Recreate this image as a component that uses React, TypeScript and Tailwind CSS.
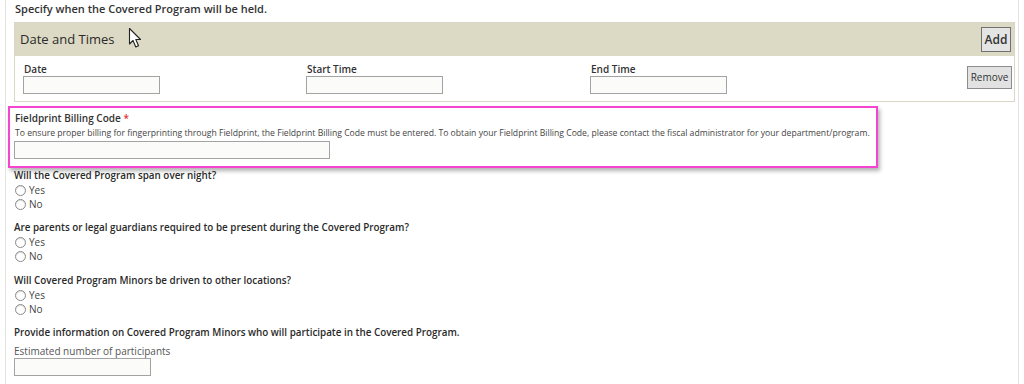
import React from "react";

const Radio = ({ label }: { label: string }) => (
  <div className="flex items-center h-[14px]">
    <span className="w-[11px] h-[11px] rounded-full border border-[#8a8a8a] bg-white ml-[1px] mr-[3px] shadow-[inset_0_1px_1px_rgba(0,0,0,0.15)]" />
    <span className="text-[10px] text-[#444]">{label}</span>
  </div>
);

const Question = ({ q, cls }: { q: string; cls: string }) => (
  <div className={cls}>
    <div className="text-[9.85px] leading-[14px] font-semibold text-[#2a2a2a]">{q}</div>
    <div className="mt-[1px]">
      <Radio label="Yes" />
      <Radio label="No" />
    </div>
  </div>
);

const Input = ({ w }: { w: string }) => (
  <div className={`${w} h-[18px] border border-[#a3a3a3] bg-[#fbfbfa]`} />
);

export default function App() {
  return (
    <div className="relative w-[1024px] h-[384px] bg-white overflow-hidden font-['Open_Sans',sans-serif]">
      <div className="ml-[5px] w-[1014px] h-full border-x border-[#e4e4df] pl-[8px] pr-[3px] pt-[2px]">
        <p className="text-[11px] leading-[14px] font-semibold text-[#333] pl-px">
          Specify when the Covered Program will be held.
        </p>
        <div className="mt-[6px] border border-[#d9d6c8]">
          <div className="h-[33px] bg-[#dcd9c4] flex items-center justify-between pl-[5px] pr-[3px]">
            <span className="text-[13px] font-medium text-[#2b2b2b]">Date and Times</span>
            <div className="w-[30px] h-[25px] border border-[#707070] bg-[#e4e4e4] flex items-center justify-center text-[12px] font-semibold text-[#333]">
              Add
            </div>
          </div>
          <div className="h-[45px] bg-white flex items-start pl-[8px] pr-[2px] pt-[6px]">
            <div className="w-[283px]">
              <div className="text-[10px] leading-[14px] font-semibold text-[#333] pl-px">Date</div>
              <Input w="w-[137px]" />
            </div>
            <div className="w-[284px]">
              <div className="text-[10px] leading-[14px] font-semibold text-[#333] pl-px">Start Time</div>
              <Input w="w-[137px]" />
            </div>
            <div className="w-[284px]">
              <div className="text-[10px] leading-[14px] font-semibold text-[#333] pl-px">End Time</div>
              <Input w="w-[137px]" />
            </div>
            <div className="ml-auto mt-[4px] w-[45px] h-[23px] border border-[#8c8c8c] bg-[#e2e2e2] flex items-center justify-center text-[10px] font-medium text-[#333]">
              Remove
            </div>
          </div>
        </div>
        <div className="mt-[4px] -ml-[6px] w-[870px] h-[62px] border-2 border-[#f545d0] shadow-[2px_3px_4px_rgba(0,0,0,0.3)] pl-[4px] pt-[3px]">
          <div className="text-[10px] leading-[14px] font-semibold text-[#333] pl-px">
            Fieldprint Billing Code <span className="text-[#d33]">*</span>
          </div>
          <div className="mt-[2px] text-[8.65px] leading-[13px] text-[#444] pl-px whitespace-nowrap">
            To ensure proper billing for fingerprinting through Fieldprint, the Fieldprint Billing Code must be entered. To obtain your Fieldprint Billing Code, please contact the fiscal administrator for your department/program.
          </div>
          <div className="mt-px">
            <Input w="w-[316px]" />
          </div>
        </div>
        <Question cls="h-[52px]" q="Will the Covered Program span over night?" />
        <Question cls="h-[53px]" q="Are parents or legal guardians required to be present during the Covered Program?" />
        <Question cls="h-[52px]" q="Will Covered Program Minors be driven to other locations?" />
        <div className="text-[9.85px] leading-[14px] font-semibold text-[#2a2a2a]">
          Provide information on Covered Program Minors who will participate in the Covered Program.
        </div>
        <div className="mt-[5px] text-[10px] leading-[14px] text-[#555]">Estimated number of participants</div>
        <Input w="w-[137px]" />
      </div>
      <svg className="absolute left-[128px] top-[27px]" width="16" height="22" viewBox="0 0 16 22">
        <path d="M1.5 1.5 L1.5 17 L5 13.5 L7.8 20 L10.5 18.8 L7.8 12.5 L12.5 12.5 Z" fill="white" stroke="#222" strokeWidth="1.1" strokeLinejoin="round" />
      </svg>
    </div>
  );
}
